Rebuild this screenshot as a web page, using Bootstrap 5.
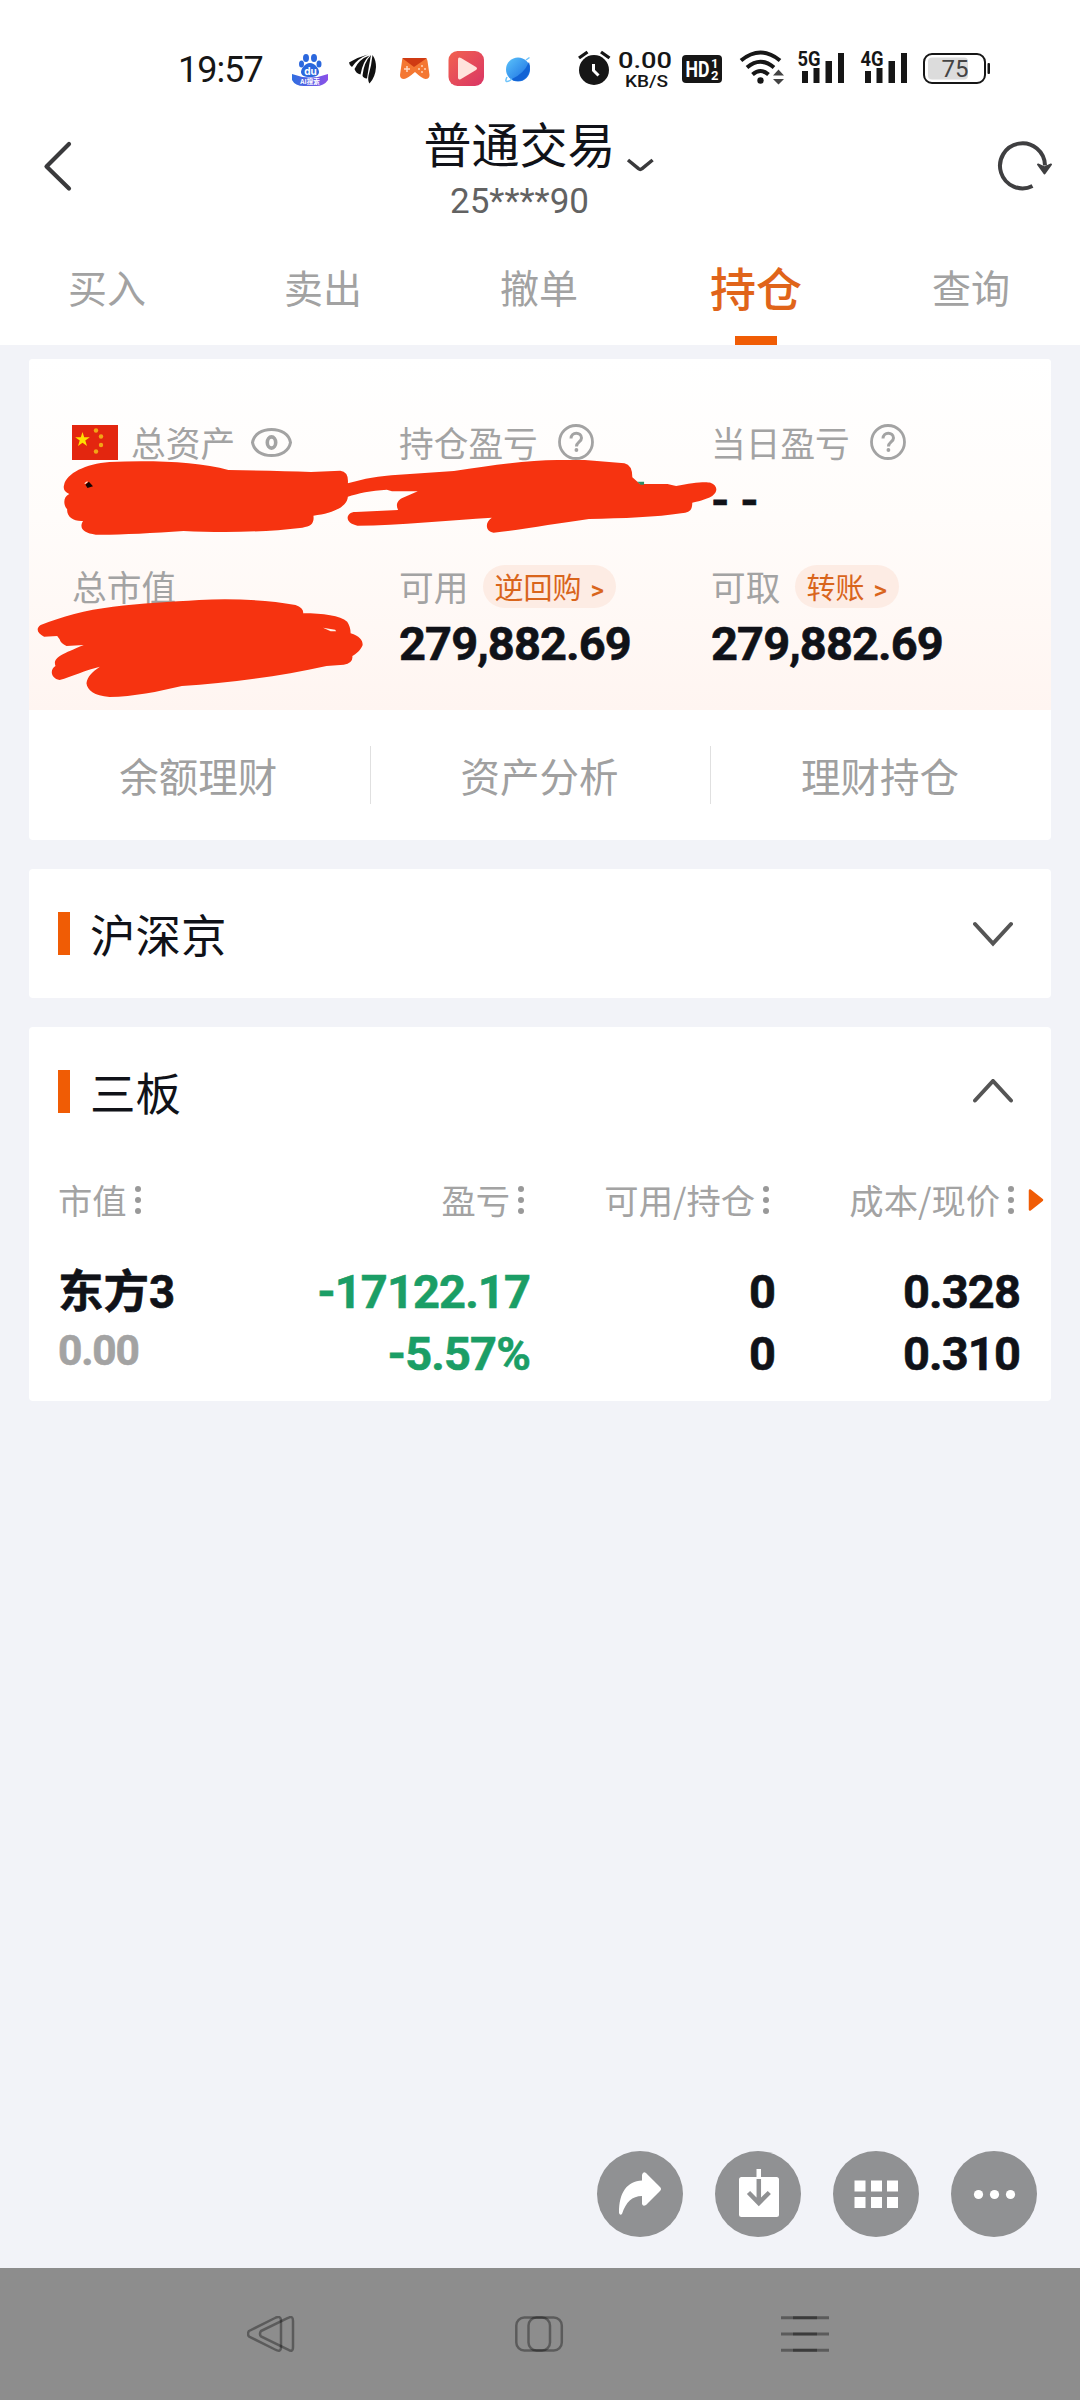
<!DOCTYPE html>
<html lang="zh-CN">
<head>
<meta charset="utf-8">
<meta name="viewport" content="width=device-width, initial-scale=1">
<title>普通交易</title>
<link href="https://cdn.jsdelivr.net/npm/bootstrap@5.3.0/dist/css/bootstrap.min.css" rel="stylesheet">
<style>
body{background:#f2f3f8;font-family:"Noto Sans CJK SC",sans-serif;color:#101218;width:1080px;height:2400px;overflow:hidden}
svg{display:block;flex:none}
.num{font-family:Roboto,"Noto Sans CJK SC",sans-serif}
.top-bar{height:345px}
.status{height:110px;padding:0 88px 0 178px}
.clock{font-size:36px;line-height:40px;width:114px;padding-top:50px;letter-spacing:-1px;color:#161616}
.title-row{height:112px;padding:0 27px 0 42px}
.title-main{font-size:48px;line-height:50px;margin-top:7px}
.title-sub{font-size:35px;line-height:36px;color:#626262;margin-top:17px}
.title-box{margin-right:56px}
.caret{right:-38px;top:22px}
.tabs-row{height:123px}
.tabs-row .tab-item{width:216px;height:123px;padding:38px 2px 0 0;font-size:39px;line-height:52px;color:#a2a2a2;text-align:center}
.tabs-row .tab-item.on{color:#e0641a;font-size:46px;font-weight:500;position:relative;padding-right:0}
.tabs-row .tab-item.on::after{content:"";position:absolute;left:87px;bottom:0;width:42px;height:9px;background:#f05c05}
.main-col{padding:14px 29px 0;gap:29px}
.panel{background:#fff;border-radius:4px}
.holdings{height:374px}
.assets{height:351px;background:linear-gradient(#fff,#fffcfa 45%,#fff5f1);border-radius:4px 4px 0 0;padding:61px 0 0 43px}
.cell-l{width:327px}.cell-m{width:312px}
.lbl{font-size:34.7px;line-height:44px;height:44px;color:#a3a3a3}
.flag-gap{margin-left:13px}
.qm{margin-left:20px}
.row-a{height:144px}
.big{font-size:47px;line-height:50px;font-weight:700;letter-spacing:-.9px;margin-top:11px;-webkit-text-stroke:.6px}
.dash{font-size:47px;line-height:50px;font-weight:700;margin-top:12px;word-spacing:-1px;-webkit-text-stroke:.6px}
.pill{height:43px;border-radius:22px;background:#fdece4;color:#d9651c;font-size:29px;line-height:42px;padding:0 12px 0 11px;margin-left:15px}
.pill span{font:500 26px/40px Roboto,sans-serif;margin-left:9px}
.links{height:130px}
.links div{width:340.600px;height:58px;line-height:58px;font-size:39.500px;color:#a0a0a0;text-align:center;margin-top:36px;padding-right:2px}
.links div+div{border-left:1px solid #e0e0e0}
.sec-head{height:129px;padding:0 38px 0 29px}
.mark-bar{width:12px;height:43px;background:#f05c05;margin-right:20px}
.sec-title{font-size:45.500px;line-height:60px;margin-top:-1px}
.heads{height:60px;margin-top:14px;font-size:34.300px;color:#a3a3a3;padding-left:29px}
.heads>div,.vals>div{text-align:right}
.c1{width:182px}.c2{width:290px}.c3{width:245px}.c4{width:245px}
.heads .c2,.heads .c3,.heads .c4{padding-right:6px}
.vals{font-size:47px;line-height:62px;font-weight:700;padding:0 0 0 29px;margin-top:31px;letter-spacing:-.9px;-webkit-text-stroke:.6px}
.vals .c1,.heads .c1{text-align:left}
.stock{font-size:45.500px;line-height:64px;white-space:nowrap;letter-spacing:0}
.mv{font-size:42.500px;color:#a3a3a3;line-height:52px;letter-spacing:-1.2px}
.green{color:#1b9e66}
.floats{right:43px;bottom:163px;gap:32px}
.nav-sys{height:132px;background:#8d8d8d;bottom:0;left:0;padding:48px 0 0 247px}
.scribble{left:0;top:0;z-index:5;pointer-events:none}
</style>
<script src="https://cdn.jsdelivr.net/npm/bootstrap@5.3.0/dist/js/bootstrap.bundle.min.js"></script>
</head>
<body class="position-relative">
<header class="top-bar bg-white">
  <div class="status d-flex">
    <div class="clock num">19:57</div>
    <svg width="246" height="110" viewBox="292 0 246 110">
      <defs>
        <linearGradient id="g1" x1="0" y1="0" x2="1" y2="0"><stop stop-color="#2f6fe0"/><stop offset="1" stop-color="#8a50e8"/></linearGradient>
        <linearGradient id="g2" x1="0" y1="0" x2="1" y2="1"><stop stop-color="#f2624f"/><stop offset="1" stop-color="#d93565"/></linearGradient>
        <linearGradient id="g3" x1="0" y1="0" x2="1" y2="1"><stop stop-color="#5cc4fb"/><stop offset="1" stop-color="#1668e0"/></linearGradient>
      </defs>
      <g fill="#2b67dd"><ellipse cx="306" cy="58" rx="3" ry="4"/><ellipse cx="314" cy="58" rx="3" ry="4"/><ellipse cx="301.500" cy="64" rx="2.500" ry="3.500"/><ellipse cx="319" cy="64" rx="2.500" ry="3.500"/><path d="M310 63c5 0 9 6 9 9s-3 5-9 5-9-2-9-5 4-9 9-9z"/></g>
      <path d="M292 74q18 7 36 0v6q-4 6-12 6h-12q-9 0-12-6z" fill="url(#g1)"/>
      <text x="310.500" y="74.500" font-size="10" font-weight="700" text-anchor="middle" fill="#fff" font-family="Inter">du</text>
      <text x="310" y="84" font-size="6.500" font-weight="700" text-anchor="middle" fill="#fff">AI搜索</text>
      <g fill="#111"><path d="M349 62.500Q358 57 368 54.500 357 59 352 67q-2.500-1-3-4.500z"/><path d="M354.500 69Q359 59 369.500 55.500 363 61 360.500 74.500q-4.500-1-6-5.500z"/><path d="M362.500 75.500Q364 62 371 55q-2 10-4 23.500-4-.5-4.500-3z"/><path d="M372.500 55q3.500 5 3.500 12-.5 10-6.500 16.500-2-3-1-8 3-10 4-20.500z"/></g>
      <path d="M404 58h21q2 0 2.500 3l2 14q0 4-4 4-3 0-10.500-7-8 7-11 7-4 0-4-4l2-14q0-3 2-3z" fill="#f47732"/><path d="M402 58h25l-13 9z" fill="#cf3a13"/><path d="M404 69h6m-3-3v6" stroke="#ffd9c4" stroke-width="1.500"/><g fill="#ffd3b8"><circle cx="422" cy="66" r="1"/><circle cx="425" cy="69" r="1"/><circle cx="419" cy="69" r="1"/><circle cx="422" cy="72" r="1"/></g>
      <rect x="448.500" y="51" width="35.500" height="35" rx="9" fill="url(#g2)"/><path d="M458 59.500q0-3 3-1.500l15 9q2 1.500 0 3l-15 9q-3 1.500-3-1.500z" fill="#ffe3dc"/>
      <circle cx="518" cy="69.500" r="12" fill="url(#g3)"/><path d="M529 62q-5 12-18 17.500 9 4 15-2 6-7 3-15.500z" fill="#1263d5"/><path d="M507 77q-2 4-.5 4.500Q508 82 512 79M526 60l3.500-2.500" fill="none" stroke="#6fc4fb" stroke-width="1.500"/>
    </svg>
    <svg class="ms-auto" width="417" height="110" viewBox="575 0 417 110" font-family="Roboto,sans-serif" fill="#161616">
      <circle cx="594" cy="70" r="15"/><path d="M579 58l8.500-6M601 52l8.500 6" stroke="#161616" stroke-width="3.300"/><path d="M593.500 64v6.500l5 5" fill="none" stroke="#fff" stroke-width="3"/>
      <text x="618" y="67.500" font-size="21.500" font-weight="500" textLength="54" lengthAdjust="spacingAndGlyphs">0.00</text>
      <text x="625" y="87" font-size="16" font-weight="500" textLength="43" lengthAdjust="spacingAndGlyphs">KB/S</text>
      <rect x="682" y="55" width="40" height="28" rx="4"/><text x="685.500" y="77" font-size="22" font-weight="700" fill="#fff" textLength="24" lengthAdjust="spacingAndGlyphs">HD</text><text x="711" y="67.500" font-size="13" font-weight="700" fill="#fff">1</text><text x="711" y="80" font-size="13" font-weight="700" fill="#fff">2</text>
      <g fill="none" stroke="#161616" stroke-width="4"><path d="M741 60.500q19.500-16 39 0M747 67.500q13.500-11.500 27 0M752.500 74.500q8-7 16 0"/></g><circle cx="760.500" cy="80.500" r="3.200"/>
      <path d="M773 75.500l5.500-6 5.500 6zM773 79l5.500 5.500 5.500-5.500z" fill="#444"/>
      <text x="797.500" y="66" font-size="20" font-weight="700" textLength="23" lengthAdjust="spacingAndGlyphs">5G</text>
      <text x="860.500" y="66" font-size="20" font-weight="700" textLength="23" lengthAdjust="spacingAndGlyphs">4G</text>
      <path d="M802 71h6v12h-6zM813.500 68h6v15h-6zM825.500 61h6.500v22h-6.500zM838 53h6v30h-6zM865 71h6v12h-6zM876.500 68h6v15h-6zM888.500 61h6.500v22h-6.500zM901 53h6v30h-6z"/>
      <rect x="928" y="57.500" width="40" height="22" rx="4" fill="#dcdcdc"/><rect x="924" y="54" width="61" height="29" rx="8" fill="none" stroke="#161616" stroke-width="2"/><rect x="987.500" y="63" width="2.500" height="11" rx="1"/>
      <text x="941.500" y="77" font-size="24" fill="#444">75</text>
    </svg>
  </div>
  <div class="title-row d-flex justify-content-between">
    <svg class="mt-4" width="56" height="64" viewBox="42 134 56 64"><path d="M69 144L46.500 166.500 69 188.500" fill="none" stroke="#3a3a3c" stroke-width="4.200" stroke-linecap="round" stroke-linejoin="round"/></svg>
    <div class="title-box text-center">
      <div class="title-main position-relative"><span>普通交易</span><svg class="caret position-absolute" width="28" height="40" viewBox="625 140 28 40"><path d="M627 161l10.500 8.700q1.800 1.300 3.600 0L651.600 161" fill="none" stroke="#3a3a3c" stroke-width="3.500"/></svg></div>
      <div class="title-sub num">25****90</div>
    </div>
    <svg class="mt-4" width="56" height="64" viewBox="998 133.500 56 64"><path d="M1033.500 185.500a22.500 22.500 0 1 1 12.500-20.500" fill="none" stroke="#3f3f41" stroke-width="4"/><path d="M1039 164l6.500 3 6.500-3-6.500 9z" fill="#3f3f41" stroke="#3f3f41" stroke-width="2" stroke-linejoin="round"/></svg>
  </div>
  <nav class="tabs-row d-flex">
    <div class="tab-item">买入</div><div class="tab-item">卖出</div><div class="tab-item">撤单</div><div class="tab-item on">持仓</div><div class="tab-item">查询</div>
  </nav>
</header>

<main class="main-col d-flex flex-column">
  <section class="panel">
    <div class="assets">
      <div class="row-a d-flex">
        <div class="cell-l">
          <div class="lbl d-flex align-items-center">
            <svg width="46" height="35" viewBox="0 0 46 35"><path fill="#e3260f" d="M0 0h46v35H0z"/><path fill="#ffe000" d="M10.500 7l1.700 5.300h5.600l-4.500 3.300 1.700 5.400-4.500-3.300L6 21l1.700-5.400-4.500-3.300h5.600z"/><g fill="#f2a516"><circle cx="24" cy="5.500" r="2.200"/><circle cx="29" cy="11.500" r="2.200"/><circle cx="29" cy="20" r="2.200"/><circle cx="24" cy="26.500" r="2.200"/></g></svg>
            <span class="flag-gap">总资产</span>
            <svg class="ms-3" width="41" height="29" viewBox="0 0 41 29" fill="none" stroke="#a3a3a3" stroke-width="3"><path d="M1.500 14.500C3 6 11 1.500 20.500 1.500S38 6 39.500 14.500C38 23 30 27.500 20.500 27.500S3 23 1.500 14.500z"/><ellipse cx="20.500" cy="14.500" rx="4.200" ry="5.600" stroke-width="3.600"/></svg>
          </div>
        </div>
        <div class="cell-m"><div class="lbl d-flex align-items-center"><span>持仓盈亏</span>
          <svg class="qm" width="36" height="36" viewBox="0 0 36 36" fill="none" stroke="#a3a3a3"><circle cx="18" cy="18" r="16.500" stroke-width="2.800"/><path d="M13 14.500c0-7 10.500-7 10.500-.5 0 4-5 4-5 8.500" stroke-width="3"/><circle cx="18.400" cy="26" r="1.900" fill="#a3a3a3" stroke="none"/></svg></div></div>
        <div><div class="lbl d-flex align-items-center"><span>当日盈亏</span>
          <svg class="qm" width="36" height="36" viewBox="0 0 36 36" fill="none" stroke="#a3a3a3"><circle cx="18" cy="18" r="16.500" stroke-width="2.800"/><path d="M13 14.500c0-7 10.500-7 10.500-.5 0 4-5 4-5 8.500" stroke-width="3"/><circle cx="18.400" cy="26" r="1.900" fill="#a3a3a3" stroke="none"/></svg></div>
          <div class="dash num">- -</div></div>
      </div>
      <div class="d-flex">
        <div class="cell-l"><div class="lbl">总市值</div></div>
        <div class="cell-m"><div class="lbl d-flex align-items-center"><span>可用</span><div class="pill">逆回购<span>&gt;</span></div></div><div class="big num">279,882.69</div></div>
        <div><div class="lbl d-flex align-items-center"><span>可取</span><div class="pill">转账<span>&gt;</span></div></div><div class="big num">279,882.69</div></div>
      </div>
    </div>
    <div class="links d-flex"><div>余额理财</div><div>资产分析</div><div>理财持仓</div></div>
  </section>

  <section class="panel">
    <div class="sec-head d-flex align-items-center"><div class="mark-bar"></div><div class="sec-title">沪深京</div>
      <svg class="ms-auto" width="40" height="26" viewBox="0 0 40 26"><path d="M2 3l18 19.500L38 3" fill="none" stroke="#555" stroke-width="4" stroke-linecap="round"/></svg></div>
  </section>

  <section class="panel holdings">
    <div class="sec-head d-flex align-items-center"><div class="mark-bar"></div><div class="sec-title">三板</div>
      <svg class="ms-auto" width="40" height="26" viewBox="0 0 40 26"><path d="M2 21.500L20 2 38 21.500" fill="none" stroke="#555" stroke-width="4" stroke-linecap="round"/></svg></div>
    <div class="heads d-flex align-items-center">
      <div class="c1 d-flex align-items-center">市值<svg class="ms-2" width="6" height="30" viewBox="0 0 6 30" fill="#999"><circle cx="3" cy="4" r="3"/><circle cx="3" cy="15" r="3"/><circle cx="3" cy="26" r="3"/></svg></div>
      <div class="c2 d-flex align-items-center justify-content-end">盈亏<svg class="ms-2" width="6" height="30" viewBox="0 0 6 30" fill="#999"><circle cx="3" cy="4" r="3"/><circle cx="3" cy="15" r="3"/><circle cx="3" cy="26" r="3"/></svg></div>
      <div class="c3 d-flex align-items-center justify-content-end">可用/持仓<svg class="ms-2" width="6" height="30" viewBox="0 0 6 30" fill="#999"><circle cx="3" cy="4" r="3"/><circle cx="3" cy="15" r="3"/><circle cx="3" cy="26" r="3"/></svg></div>
      <div class="c4 d-flex align-items-center justify-content-end">成本/现价<svg class="ms-2" width="6" height="30" viewBox="0 0 6 30" fill="#999"><circle cx="3" cy="4" r="3"/><circle cx="3" cy="15" r="3"/><circle cx="3" cy="26" r="3"/></svg></div>
      <svg class="ms-2" width="16" height="24" viewBox="0 0 16 24"><path d="M2 2.500L14 12 2 21.500z" fill="#f05c05" stroke="#f05c05" stroke-width="2.500" stroke-linejoin="round"/></svg>
    </div>
    <div class="vals num d-flex">
      <div class="c1"><div class="stock">东方3</div><div class="mv">0.00</div></div>
      <div class="c2 green"><div>-17122.17</div><div>-5.57%</div></div>
      <div class="c3"><div>0</div><div>0</div></div>
      <div class="c4"><div>0.328</div><div>0.310</div></div>
    </div>
  </section>
</main>

<svg class="scribble position-absolute" width="1080" height="720" viewBox="0 0 1080 720">
  <g transform="translate(20 350) scale(.3444 .3333)" fill="#f63310">
    <path d="M128,405 C135,370 190,342 260,336 C380,330 520,335 605,360 C700,362 780,364 845,366 L930,362 Q955,365 952,400 C1000,385 1040,378 1100,374 L1260,363 C1380,345 1480,330 1560,330 L1640,330 L1755,340 Q1778,345 1778,382 L1800,402 L1880,402 L1905,408 C1950,398 1990,394 2005,398 C2025,405 2028,425 2010,438 C1990,450 1965,455 1952,458 C1952,480 1945,488 1920,490 C1850,502 1750,505 1652,507 C1560,520 1450,540 1375,548 C1350,545 1350,515 1370,503 C1250,510 1100,527 980,527 C940,520 945,485 975,486 L1098,480 C1090,465 1095,450 1115,442 L1155,424 L1080,424 L1065,419 C1020,422 980,430 952,440 C950,470 910,490 852,497 C855,520 845,530 820,533 C700,548 580,548 475,543 C380,550 280,555 220,554 C185,550 170,535 183,513 C155,515 135,500 137,478 C125,465 125,440 143,432 C128,425 125,415 128,405Z"/>
    <path d="M60,825 C120,800 190,780 270,770 C350,760 440,755 520,750 C620,745 720,750 800,765 Q825,775 822,790 C880,790 930,797 950,815 Q960,830 960,850 C985,858 995,870 995,885 C990,900 975,912 965,918 Q968,940 940,944 L890,948 C750,980 600,1000 470,1008 C400,1025 330,1040 260,1041 C215,1038 195,1020 193,1000 C195,980 210,965 232,950 C190,960 150,980 115,990 C90,985 85,960 103,948 C95,925 115,915 185,885 L135,888 Q118,880 115,868 L108,858 L70,860 C50,850 45,835 60,825Z"/>
    <path d="M880,833L915,839 918,844 902,844z" fill="#fff3e8"/>
    <path d="M190,404L200,395 212,409 196,414z" fill="#140605"/><path d="M188,401l8-6" stroke="#ffe" stroke-width="3"/>
    <path d="M1792,395h20v9h-10z" fill="#2c9068"/>
  </g>
</svg>

<div class="floats position-absolute d-flex">
  <svg width="86" height="86" viewBox="0 0 86 86"><circle cx="43" cy="43" r="43" fill="#909193"/><path d="M22 62c0-21 8-31.500 23-32.500V24q1-4 4-2L63 36q2 2 0 4L49 54q-3 2-4-1v-8c-10 0-16 6-20 18q-2 2-3-1z" fill="#fff"/></svg>
  <svg width="86" height="86" viewBox="0 0 86 86"><circle cx="43" cy="43" r="43" fill="#909193"/><rect x="24" y="26" width="40" height="40" rx="2.500" fill="#fff"/><path d="M41.500 18h4.500v9h-4.500z" fill="#fff"/><path d="M43.800 28v24M33.500 41.500L43.800 52 54.300 41.500" fill="none" stroke="#909193" stroke-width="4.500"/></svg>
  <svg width="86" height="86" viewBox="0 0 86 86"><circle cx="43" cy="43" r="43" fill="#909193"/><path fill="#fff" d="M21.500 29.500h11v11h-11zM38 29.500h11v11H38zM54 29.500h11v11H54zM21.500 46h11v11h-11zM38 46h11v11H38zM54 46h11v11H54z"/></svg>
  <svg width="86" height="86" viewBox="0 0 86 86"><circle cx="43" cy="43" r="43" fill="#909193"/><g fill="#fff"><circle cx="27.500" cy="43.500" r="4.600"/><circle cx="43.500" cy="43.500" r="4.600"/><circle cx="59.500" cy="43.500" r="4.600"/></g></svg>
</div>
<footer class="nav-sys position-absolute w-100">
  <svg width="584" height="38" viewBox="247 2316 584 38" fill="none" stroke="#000" stroke-opacity=".35" stroke-width="2.500">
    <path d="M249 2331L275 2318Q281 2315 281 2321V2347Q281 2353 275 2349.500L249 2336.500Q247 2334 249 2331z"/><path d="M261 2331L288 2318Q293 2315 293 2321V2347Q293 2353 288 2349.500L261 2336.500Q259 2334 261 2331z"/>
    <rect x="516.300" y="2317.500" width="45.500" height="33" rx="8"/><rect x="528.500" y="2317.500" width="21.500" height="33" rx="8"/>
    <path d="M781 2317.700h48M781 2334h48M781 2350.300h48" stroke-width="3"/><path d="M793 2317.700h24M793 2334h24M793 2350.300h24" stroke-width="3"/>
  </svg>
</footer>
</body>
</html>
